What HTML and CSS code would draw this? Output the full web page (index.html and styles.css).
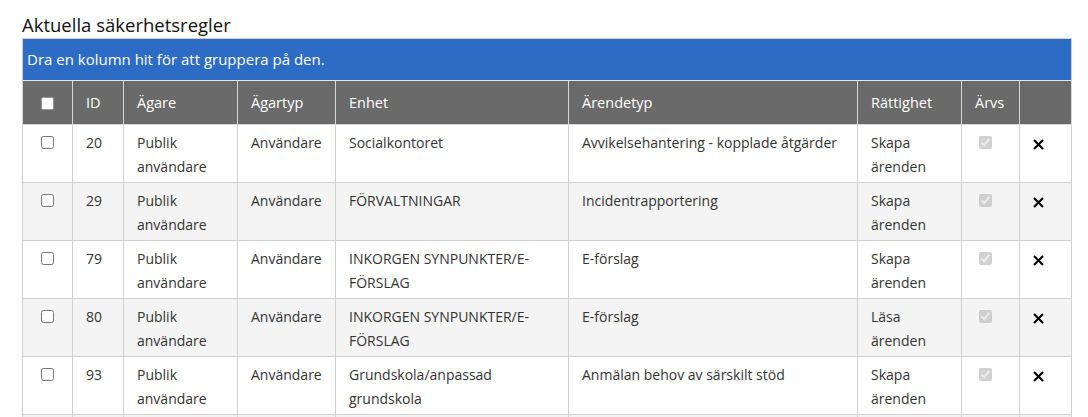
FILE: index.html
```html
<!DOCTYPE html>
<html lang="sv">
<head>
<meta charset="utf-8">
<title>Aktuella säkerhetsregler</title>
<link rel="stylesheet" href="styles.css">
</head>
<body>
<div class="page">
  <h4 class="title">Aktuella säkerhetsregler</h4>
  <div class="grid">
    <div class="group-bar">Dra en kolumn hit för att gruppera på den.</div>
    <table class="rules">
      <colgroup>
        <col class="c-sel"><col class="c-id"><col class="c-owner"><col class="c-otype"><col class="c-unit"><col class="c-etype"><col class="c-right"><col class="c-inh"><col class="c-del">
      </colgroup>
      <thead>
        <tr>
          <th class="sel"><span class="hdr-check"></span></th>
          <th>ID</th>
          <th>Ägare</th>
          <th>Ägartyp</th>
          <th>Enhet</th>
          <th>Ärendetyp</th>
          <th>Rättighet</th>
          <th>Ärvs</th>
          <th></th>
        </tr>
      </thead>
      <tbody>
        <tr>
          <td class="sel"><input type="checkbox"></td>
          <td>20</td><td>Publik användare</td><td>Användare</td><td>Socialkontoret</td><td>Avvikelsehantering - kopplade åtgärder</td><td>Skapa ärenden</td>
          <td><input type="checkbox" class="inh" checked disabled></td>
          <td><svg class="del" viewBox="0 0 11 11"><path d="M1 1 L10 10 M10 1 L1 10"/></svg></td>
        </tr>
        <tr class="alt">
          <td class="sel"><input type="checkbox"></td>
          <td>29</td><td>Publik användare</td><td>Användare</td><td>FÖRVALTNINGAR</td><td>Incidentrapportering</td><td>Skapa ärenden</td>
          <td><input type="checkbox" class="inh" checked disabled></td>
          <td><svg class="del" viewBox="0 0 11 11"><path d="M1 1 L10 10 M10 1 L1 10"/></svg></td>
        </tr>
        <tr>
          <td class="sel"><input type="checkbox"></td>
          <td>79</td><td>Publik användare</td><td>Användare</td><td>INKORGEN SYNPUNKTER/E-FÖRSLAG</td><td>E-förslag</td><td>Skapa ärenden</td>
          <td><input type="checkbox" class="inh" checked disabled></td>
          <td><svg class="del" viewBox="0 0 11 11"><path d="M1 1 L10 10 M10 1 L1 10"/></svg></td>
        </tr>
        <tr class="alt">
          <td class="sel"><input type="checkbox"></td>
          <td>80</td><td>Publik användare</td><td>Användare</td><td>INKORGEN SYNPUNKTER/E-FÖRSLAG</td><td>E-förslag</td><td>Läsa ärenden</td>
          <td><input type="checkbox" class="inh" checked disabled></td>
          <td><svg class="del" viewBox="0 0 11 11"><path d="M1 1 L10 10 M10 1 L1 10"/></svg></td>
        </tr>
        <tr>
          <td class="sel"><input type="checkbox"></td>
          <td>93</td><td>Publik användare</td><td>Användare</td><td>Grundskola/anpassad grundskola</td><td>Anmälan behov av särskilt stöd</td><td>Skapa ärenden</td>
          <td><input type="checkbox" class="inh" checked disabled></td>
          <td><svg class="del" viewBox="0 0 11 11"><path d="M1 1 L10 10 M10 1 L1 10"/></svg></td>
        </tr>
        <tr class="alt">
          <td class="sel"></td>
          <td></td><td></td><td></td><td></td><td></td><td></td><td></td><td></td>
        </tr>
      </tbody>
    </table>
  </div>
</div>
</body>
</html>
```

FILE: styles.css
```css
html, body {
  margin: 0;
  padding: 0;
  background: #ffffff;
  overflow: hidden;
}
body {
  font-family: "Open Sans", "Noto Sans", "Liberation Sans", sans-serif;
  font-size: 14px;
  color: #333333;
}
.page {
  padding: 0 17px 0 22px;
}
.title {
  margin: 0;
  padding-top: 12px;
  height: 26px;
  font-size: 18.5px;
  font-weight: 400;
  line-height: 26px;
  color: #111111;
}
.grid {
  width: 1050px;
  border: 1px solid #cfcfcf;
  border-bottom: none;
  box-sizing: border-box;
}
.group-bar {
  background: #2d6cc4;
  color: #ffffff;
  height: 41px;
  line-height: 41px;
  padding-left: 4px;
  font-size: 15px;
  border-bottom: 1px solid #e6e6e6;
}
.rules {
  width: 1049px;
  margin-left: -1px;
  border-collapse: collapse;
  table-layout: fixed;
}
.c-sel { width: 50px; }
.c-id { width: 51px; }
.c-owner { width: 114px; }
.c-otype { width: 98px; }
.c-unit { width: 233px; }
.c-etype { width: 289px; }
.c-right { width: 104px; }
.c-inh { width: 58px; }
.c-del { width: 52px; }

.rules th {
  background: #6a6a6a;
  color: #ffffff;
  font-weight: 400;
  font-size: 14.5px;
  text-align: left;
  height: 43px;
  padding: 0 13px;
  border-left: 1px solid #d8d8d8;
  border-right: 1px solid #d8d8d8;
  border-bottom: 1px solid #d8d8d8;
  line-height: 20px;
  vertical-align: middle;
}
.rules td {
  padding: 6px 13px 3px;
  line-height: 24px;
  height: 48px;
  vertical-align: top;
  border: 1px solid #d0d0d0;
  overflow-wrap: break-word;
}
.rules tr.alt td {
  background: #f4f4f4;
}
.rules .sel {
  text-align: center;
  padding-left: 0;
  padding-right: 0;
}
.hdr-check {
  display: inline-block;
  width: 11px;
  height: 11px;
  background: #ffffff;
  border: 1px solid #9a9a9a;
  border-radius: 2px;
  vertical-align: middle;
  margin-left: -1px;
}
.rules input[type="checkbox"] {
  width: 13px;
  height: 13px;
  margin: 5px 0 0 0;
  vertical-align: top;
}
.rules input.inh {
  margin-left: 4px;
}
.del {
  display: inline-block;
  width: 11px;
  height: 11px;
  margin: 8px 0 0 0;
  vertical-align: top;
  fill: none;
  stroke: #000000;
  stroke-width: 2.1;
}
```
